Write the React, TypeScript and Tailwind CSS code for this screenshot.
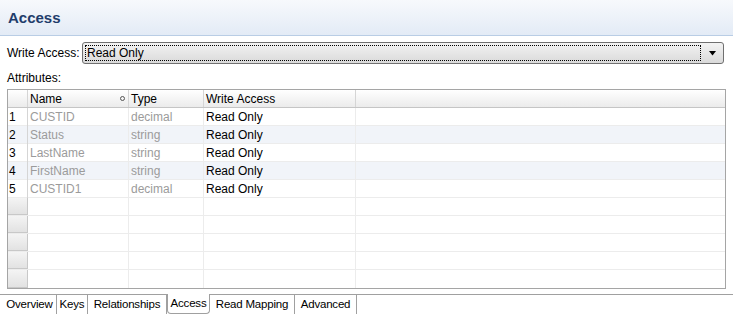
import React from 'react'

const font = { fontFamily: '"Liberation Sans", Arial, sans-serif' }

type Row = { name: string; type: string; access: string }

const rows: Row[] = [
  { name: 'CUSTID', type: 'decimal', access: 'Read Only' },
  { name: 'Status', type: 'string', access: 'Read Only' },
  { name: 'LastName', type: 'string', access: 'Read Only' },
  { name: 'FirstName', type: 'string', access: 'Read Only' },
  { name: 'CUSTID1', type: 'decimal', access: 'Read Only' },
]

const tabs = [
  { label: 'Overview', w: 'w-[54px]' },
  { label: 'Keys', w: 'w-[31px]' },
  { label: 'Relationships', w: 'w-[79px]' },
  { label: 'Access', w: 'w-[43px]' },
  { label: 'Read Mapping', w: 'w-[85px]' },
  { label: 'Advanced', w: 'w-[62px]' },
]

const cols = 'grid grid-cols-[20px_101px_75px_152px_1fr]'

function HeaderCell({ children, last }: { children?: React.ReactNode; last?: boolean }) {
  return (
    <div
      className={`flex h-[17px] items-center bg-gradient-to-b from-white to-[#ebebeb] pl-[2px] text-[12px] leading-none text-black ${
        last ? '' : 'border-r border-[#d5d5d5]'
      }`}
    >
      {children}
    </div>
  )
}

export default function App() {
  return (
    <div className="h-[314px] w-[733px] overflow-hidden bg-white" style={font}>
      <div className="flex h-[36px] items-center border-b border-[#b9cde5] bg-gradient-to-b from-[#f7f9fc] to-[#e3ebf6] pl-[8px] pt-[2px]">
        <span className="text-[15px] font-bold text-[#1f3d6b]">Access</span>
      </div>

      <div className="mt-[6px] flex h-[22px] items-center pl-[7px] pr-[9px]">
        <span className="w-[75px] text-[12px] text-black">Write Access:</span>
        <div className="flex h-[22px] flex-1 items-center rounded-[3px] border border-[#707070] bg-gradient-to-b from-[#f3f3f3] to-[#dadada] pl-[2px] pr-[6px]">
          <div className="flex h-[16px] flex-1 items-center border border-dotted border-black pl-[1px] text-[12px] text-black">
            Read Only
          </div>
          <svg width="9" height="5" viewBox="0 0 9 5" className="ml-[7px]">
            <path d="M1 0h7L4.5 4.5z" fill="#000" />
          </svg>
        </div>
      </div>

      <div className="mt-[5px] pl-[7px] text-[12px] text-black">Attributes:</div>

      <div className="ml-[7px] mr-[7px] mt-[2px] border border-[#a5a5a5]">
        <div className={`${cols} border-b border-[#c5c5c5]`}>
          <HeaderCell />
          <HeaderCell>
            <span className="flex-1">Name</span>
            <span className="mr-[3px] h-[5px] w-[5px] rounded-full border border-[#555]" />
          </HeaderCell>
          <HeaderCell>Type</HeaderCell>
          <HeaderCell>Write Access</HeaderCell>
          <HeaderCell last />
        </div>

        {rows.map((r, i) => (
          <div key={r.name} className={`${cols} h-[18px] border-b border-[#ececec] ${i % 2 ? 'bg-[#f1f4f9]' : 'bg-white'}`}>
            <div className="flex items-center border-r border-[#d5d5d5] pl-[1px] text-[12px] text-black">{i + 1}</div>
            <div className="flex items-center border-r border-[#ececec] pl-[2px] text-[12px] text-[#9b9b9b]">{r.name}</div>
            <div className="flex items-center border-r border-[#ececec] pl-[2px] text-[12px] text-[#9b9b9b]">{r.type}</div>
            <div className="flex items-center border-r border-[#ececec] pl-[2px] text-[12px] text-black">{r.access}</div>
            <div />
          </div>
        ))}

        {[0, 1, 2, 3, 4].map((i) => (
          <div key={i} className={`${cols} h-[18px] ${i < 4 ? 'border-b border-[#ececec]' : ''}`}>
            <div className="border-r border-b border-[#c8c8c8] bg-gradient-to-b from-[#f4f4f4] to-[#e2e2e2]" />
            <div className="border-r border-[#ececec]" />
            <div className="border-r border-[#ececec]" />
            <div className="border-r border-[#ececec]" />
            <div />
          </div>
        ))}
      </div>

      <div className="mt-[5px] flex h-[21px] border-t border-[#a0a0a0]">
        <div className="w-[3px]" />
        {tabs.map((t) => {
          const active = t.label === 'Access'
          return (
            <div
              key={t.label}
              className={`flex items-center justify-center overflow-hidden whitespace-nowrap border-r border-[#a0a0a0] text-[11.5px] tracking-[-0.2px] text-black ${t.w} ${
                active ? '-mt-px mb-[1px] rounded-b-[4px] border-b border-l bg-white' : ''
              }`}
            >
              {t.label}
            </div>
          )
        })}
      </div>
    </div>
  )
}
